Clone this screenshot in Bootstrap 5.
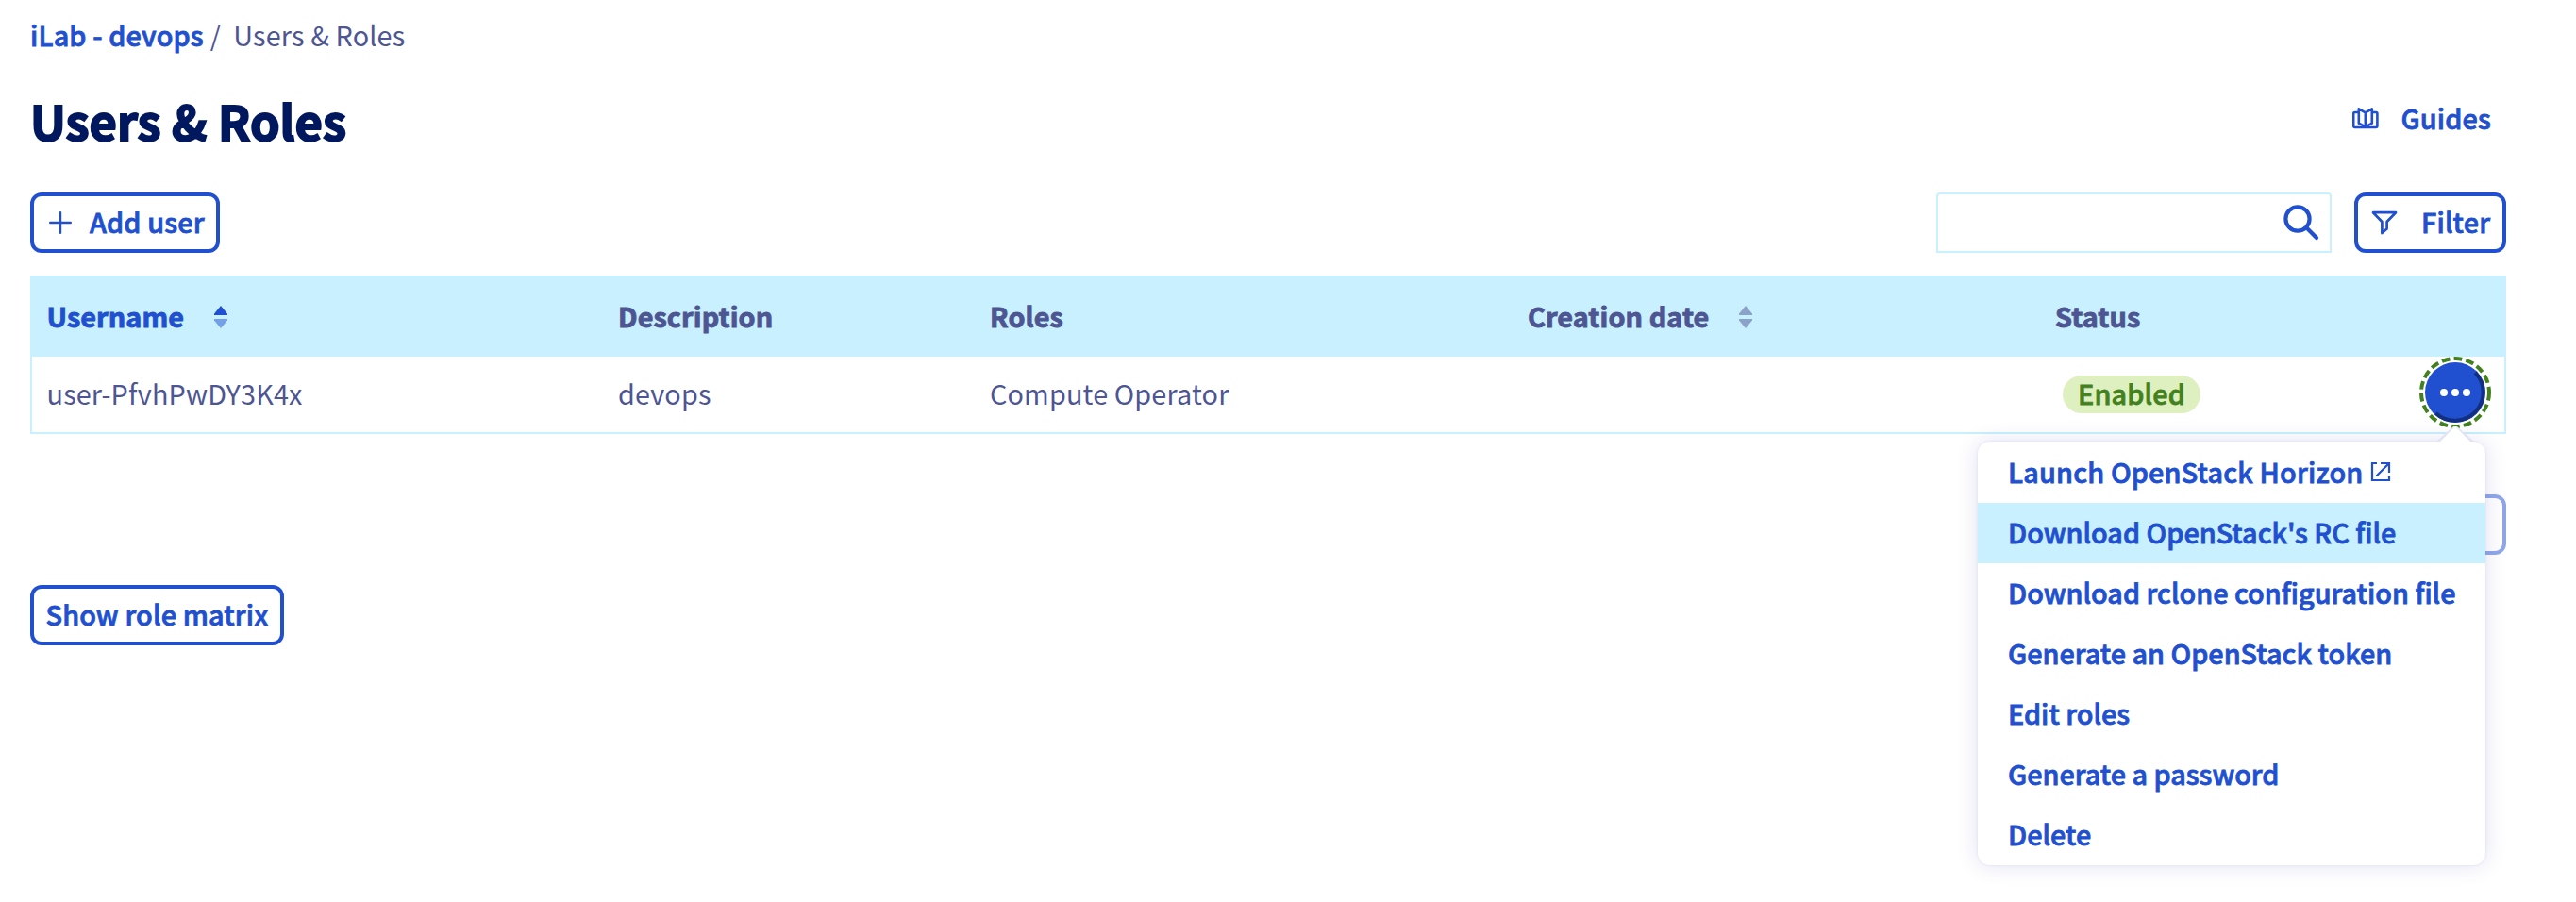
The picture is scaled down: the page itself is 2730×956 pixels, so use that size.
<!DOCTYPE html>
<html lang="en">
<head>
<meta charset="utf-8">
<title>Users &amp; Roles</title>
<meta name="viewport" content="width=device-width, initial-scale=1">
<link rel="stylesheet" href="https://cdn.jsdelivr.net/npm/bootstrap@5.3.0/dist/css/bootstrap.min.css">
<style>
  :root { --blue: #2050d0; --slate: #4d5592; --navy: #00185e; --ice: #c8f0fe; }
  body { font-family: "Noto Sans CJK SC", sans-serif; font-size: 28.8px; line-height: 40px; letter-spacing: .15px; color: var(--slate); background: #fff; min-height: 100vh; }
  .page { padding: 17px 74px 0 32px; min-height: 100vh; }
  .breadcrumb { font-size: inherit; height: 40px; }
  .strong-link, .btn-line, .badge-on, .menu-panel .dropdown-item { font-weight: 500; -webkit-text-stroke: .8px currentColor; }
  .strong-link { color: var(--blue); text-decoration: none; }
  h1 { font-size: 50.6px; line-height: 60px; font-weight: 700; letter-spacing: 0; color: var(--navy); -webkit-text-stroke: 1.9px currentColor; }
  .btn-line { --bs-btn-color: var(--blue); --bs-btn-border-color: var(--blue); --bs-btn-border-width: 4px; --bs-btn-border-radius: 12px; --bs-btn-font-size: 28.8px; --bs-btn-font-weight: 500; --bs-btn-line-height: 40px; --bs-btn-disabled-color: var(--blue); --bs-btn-disabled-border-color: var(--blue); --bs-btn-disabled-opacity: .5; height: 64px; padding: 7px 11.5px 9px; letter-spacing: .15px; font-family: inherit; white-space: nowrap; }
  .btn-add { width: 201px; padding-left: 16px; gap: 19px; }
  .btn-filter { width: 161px; padding-left: 14px; gap: 25px; }
  .btn-matrix { width: 269px; }
  .btn-next { width: 200px; }
  .search { width: 419px; height: 64px; border: 2px solid var(--ice); border-radius: 4px 4px 0 0; padding-right: 11px; color: var(--blue); }
  .search input { border: 0; box-shadow: none; background: transparent; min-width: 0; }
  svg { display: block; fill: none; stroke: currentColor; flex: none; }
  .grid-frame { border: 2px solid var(--ice); border-top: 0; margin-top: 24px; }
  .grid-frame .table { --bs-table-color: var(--slate); --bs-table-bg: transparent; table-layout: fixed; margin: 0; }
  .table > :not(caption) > * > * { border: 0; padding: 0 12px 0 15px; vertical-align: middle; color: var(--slate); }
  .table thead { background: var(--ice); }
  .table thead th { height: 86px; font-weight: 700; letter-spacing: .1px; -webkit-text-stroke: .9px currentColor; }
  .table > thead > tr > th.sorted { color: var(--blue); }
  .table tbody td { height: 80px; }
  .table > :not(caption) > * > :first-child { padding-left: 15.5px; }
  .txt { display: block; padding-bottom: 3px; }
  .sorter { fill: currentColor; stroke: none; margin-top: 2px; }
  .badge-on { display: inline-block; background: #dff0c0; color: #43811f; border-radius: 20px; height: 40px; line-height: 38px; width: 146px; text-align: center; margin-left: 8px; vertical-align: middle; }
  .actions { width: 64px; height: 64px; margin: -4px 8px 0 auto; }
  .btn-dots { width: 64px; height: 64px; border: 0; padding: 0; border-radius: 50%; background: none; }
  .btn-dots svg { margin: -6px; stroke: none; }
  .menu-panel { width: 538px; top: 84px; right: 0; border-radius: 13px; background: #fff; padding: 1px 0 0; box-shadow: 0 0 22px rgba(80,80,190,.18), 0 0 3px rgba(80,80,190,.1); z-index: 5; letter-spacing: 0; }
  .menu-panel .dropdown-item { height: 64px; padding: 11px 0 13px 32px; color: var(--blue); line-height: 40px; display: flex; align-items: center; gap: 8px; }
  .menu-panel .dropdown-item.hovered { background: var(--ice); }
  .menu-panel .launch { letter-spacing: .17px; }
  .menu-tip { position: absolute; top: -17px; right: 12px; stroke: none; }
</style>
</head>
<body>
<main class="page">
  <nav aria-label="breadcrumb">
    <ol class="breadcrumb m-0 flex-nowrap">
      <li><a class="strong-link" href="#">iLab - devops</a></li>
      <li style="margin-left:7px">/</li>
      <li style="margin-left:13px">Users &amp; Roles</li>
    </ol>
  </nav>

  <header class="d-flex justify-content-between align-items-center" style="margin-top:40px">
    <h1 class="m-0">Users &amp; Roles</h1>
    <a class="strong-link d-flex align-items-center pb-1" href="#" style="margin-right:16px;gap:24px">
      <svg width="28" height="24" viewBox="0 0 28 24" stroke-width="2.6" stroke-linejoin="round"><path d="M6.5 6H2.5Q1.2 6 1.2 7.5V20.5Q1.2 22 2.5 22H25Q26.4 22 26.4 20.5V7.5Q26.4 6 25 6H21"/><path d="M6.8 2.4L13.8 6.4L20.8 2.4V17.6L13.8 21.4L6.8 17.6ZM13.8 6.4V21.4"/></svg>
      <span>Guides</span>
    </a>
  </header>

  <div class="d-flex align-items-center" style="margin-top:47px">
    <button class="btn btn-line btn-add d-flex align-items-center">
      <svg width="24" height="24" viewBox="0 0 24 24" stroke-width="2.4" stroke-linecap="round" style="margin-top:2px"><path d="M12 1.2V22.8M1.2 12H22.8"/></svg>
      <span>Add user</span>
    </button>
    <div class="search d-flex align-items-center ms-auto">
      <input class="form-control" type="search" aria-label="Search">
      <svg width="38" height="38" viewBox="0 0 38 38" stroke-width="4.2" stroke-linecap="round"><circle cx="15" cy="15" r="12.6"/><path d="M24.3 24.3L35 35"/></svg>
    </div>
    <button class="btn btn-line btn-filter d-flex align-items-center" style="margin-left:24px">
      <svg width="28" height="26" viewBox="0 0 28 26" stroke-width="2.7" stroke-linejoin="round" style="margin-top:2px"><path d="M2 2.2H26L16.6 12V19.5L11.4 24V12Z"/></svg>
      <span>Filter</span>
    </button>
  </div>

  <div class="grid-frame">
    <table class="table">
      <colgroup><col style="width:606px"><col style="width:394px"><col style="width:570px"><col style="width:559px"><col></colgroup>
      <thead>
        <tr>
          <th class="sorted"><div class="d-flex align-items-center"><span>Username</span><svg class="sorter" style="margin-left:31px" width="16" height="24" viewBox="0 0 16 24"><path d="M8 0L15 8.5V10H1V8.5Z"/><path opacity=".5" d="M8 24L15 15.5V14H1V15.5Z"/></svg></div></th>
          <th>Description</th>
          <th>Roles</th>
          <th><div class="d-flex align-items-center"><span>Creation date</span><svg class="sorter" style="margin-left:31px" width="16" height="24" viewBox="0 0 16 24"><path opacity=".5" d="M8 0L15 8.5V10H1V8.5ZM8 24L15 15.5V14H1V15.5Z"/></svg></div></th>
          <th>Status</th>
        </tr>
      </thead>
      <tbody>
        <tr>
          <td><span class="txt">user-PfvhPwDY3K4x</span></td>
          <td><span class="txt">devops</span></td>
          <td><span class="txt">Compute Operator</span></td>
          <td></td>
          <td>
            <div class="d-flex align-items-center">
              <span class="badge-on">Enabled</span>
              <div class="actions position-relative">
                <button class="btn-dots" aria-label="Actions">
                  <svg width="76" height="76" viewBox="0 0 76 76">
                    <circle cx="38" cy="38" r="36" stroke="#43811f" stroke-width="4" stroke-dasharray="8.7 4.22"/>
                    <circle cx="38" cy="38" r="32" fill="#2050d0"/>
                    <path d="M59.2 16.8A30 30 0 0 1 17.5 59.9" stroke="#12307f" stroke-width="4"/>
                    <g fill="#fff"><circle cx="26" cy="38" r="4"/><circle cx="38" cy="38" r="4"/><circle cx="50" cy="38" r="4"/></g>
                  </svg>
                </button>
                <div class="menu-panel position-absolute">
                  <svg class="menu-tip" width="40" height="18" viewBox="0 0 40 18"><path d="M0 17L18 1H22L40 17Z" fill="#e3e3f4"/><path d="M3 18L20 1L37 18Z" fill="#fff"/></svg>
                  <a class="dropdown-item launch" href="#" style="border-radius:13px 13px 0 0"><span>Launch OpenStack Horizon</span><svg width="22" height="22" viewBox="0 0 22 22" stroke-width="2.2"><path d="M7 2H2V20H20V15M11 2H20V12M20 2L6.5 15.5"/></svg></a>
                  <a class="dropdown-item hovered" href="#">Download OpenStack's RC file</a>
                  <a class="dropdown-item" href="#">Download rclone configuration file</a>
                  <a class="dropdown-item" href="#">Generate an OpenStack token</a>
                  <a class="dropdown-item" href="#">Edit roles</a>
                  <a class="dropdown-item" href="#">Generate a password</a>
                  <a class="dropdown-item" href="#" style="border-radius:0 0 13px 13px">Delete</a>
                </div>
              </div>
            </div>
          </td>
        </tr>
      </tbody>
    </table>
  </div>

  <div class="d-flex justify-content-end" style="margin-top:64px">
    <button class="btn btn-line btn-next" disabled aria-label="Next page"></button>
  </div>
  <button class="btn btn-line btn-matrix d-block" style="margin-top:32px">Show role matrix</button>
</main>
<script src="https://cdn.jsdelivr.net/npm/bootstrap@5.3.0/dist/js/bootstrap.bundle.min.js"></script>
</body>
</html>
